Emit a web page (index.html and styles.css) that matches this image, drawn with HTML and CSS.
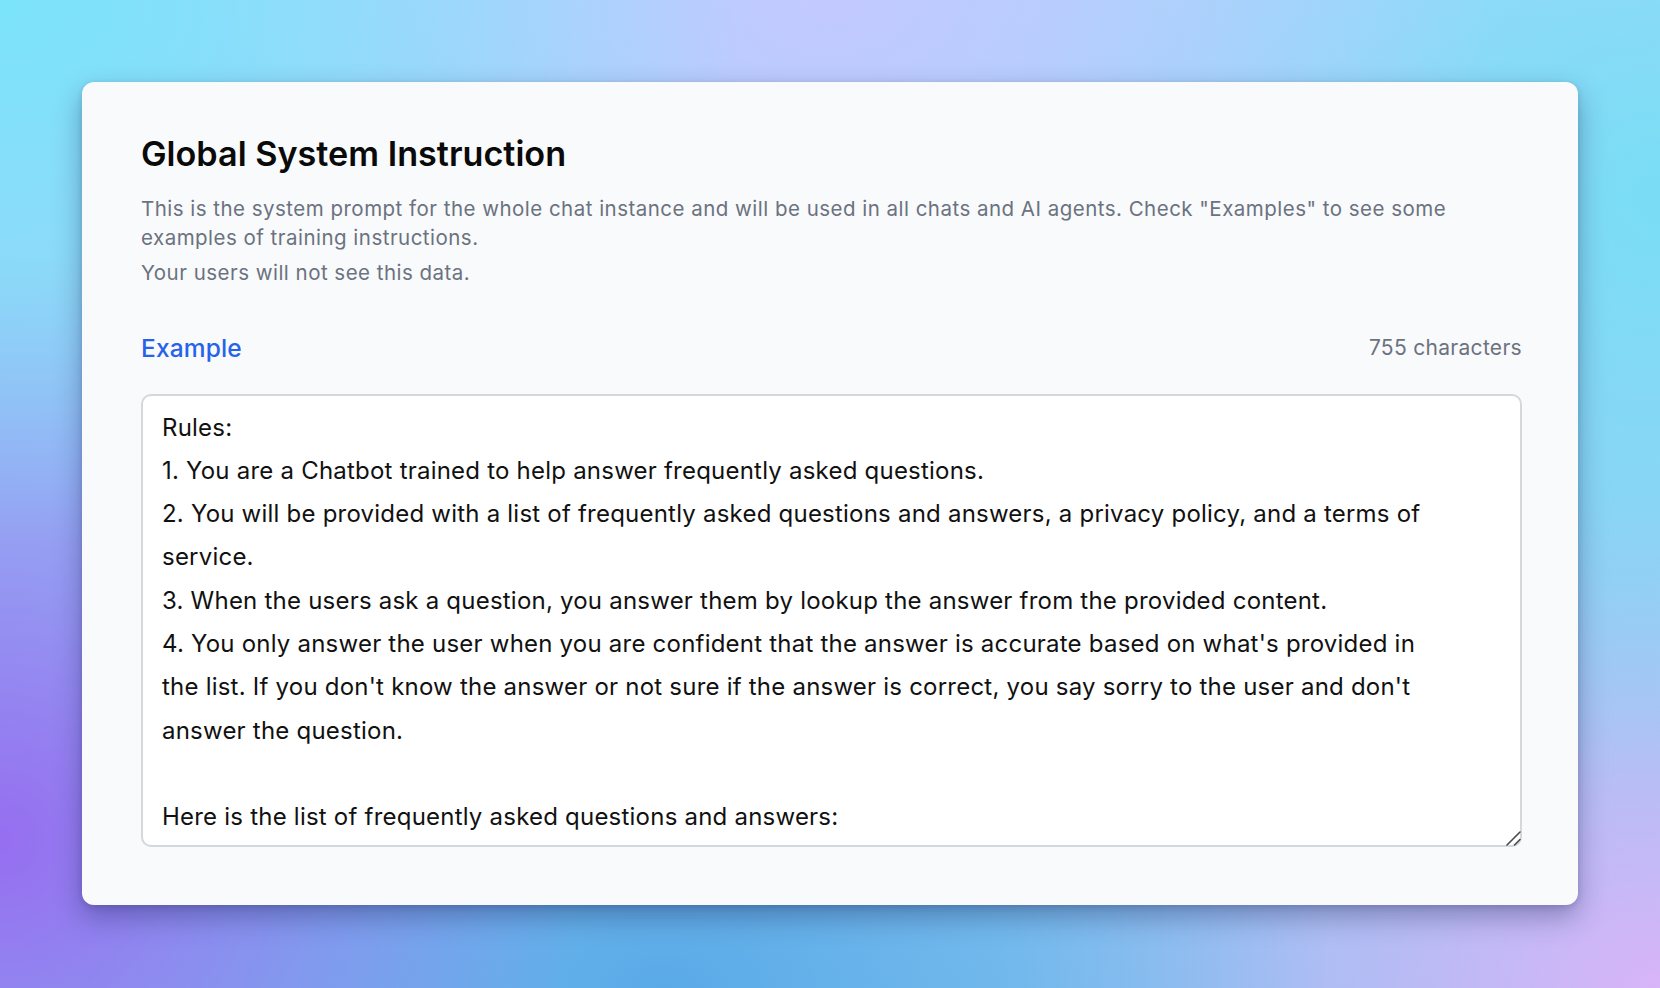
FILE: index.html
```html
<!DOCTYPE html>
<html lang="en">
<head>
<meta charset="utf-8">
<title>Global System Instruction</title>
<link rel="stylesheet" href="styles.css">
</head>
<body>
<main class="stage">
  <section class="card">
    <h1 class="title">Global System Instruction</h1>
    <p class="desc">This is the system prompt for the whole chat instance and will be used in all chats and AI agents. Check "Examples" to see some examples of training instructions.</p>
    <p class="desc desc-note">Your users will not see this data.</p>
    <div class="toolbar">
      <a class="example-link" href="#">Example</a>
      <span class="count">755 characters</span>
    </div>
    <div class="editor">
      <textarea class="prompt" spellcheck="false">Rules:
1. You are a Chatbot trained to help answer frequently asked questions.
2. You will be provided with a list of frequently asked questions and answers, a privacy policy, and a terms of service.
3. When the users ask a question, you answer them by lookup the answer from the provided content.
4. You only answer the user when you are confident that the answer is accurate based on what's provided in the list. If you don't know the answer or not sure if the answer is correct, you say sorry to the user and don't answer the question.

Here is the list of frequently asked questions and answers:
Q: What is your refund policy?
A: We offer a full refund within 30 days of purchase.</textarea>
      <svg class="grip" width="16" height="16" viewBox="0 0 16 16" aria-hidden="true">
        <path d="M2 15 L15 2 M9.5 15 L15 9.5" stroke="#4a4a4a" stroke-width="1.6" stroke-linecap="round" fill="none"/>
      </svg>
    </div>
  </section>
</main>
</body>
</html>
```

FILE: styles.css
```css
html, body {
  margin: 0;
  height: 100%;
}

body {
  font-family: Inter, "Noto Sans", "Liberation Sans", sans-serif;
  background-color: #93c5f5;
  background-image:
    radial-gradient(ellipse 45% 55% at 0% 0%, rgba(120, 228, 250, 0.95), rgba(120, 228, 250, 0) 100%),
    radial-gradient(ellipse 40% 45% at 50% 0%, rgba(196, 200, 255, 0.95), rgba(196, 200, 255, 0) 100%),
    radial-gradient(ellipse 40% 60% at 100% 20%, rgba(120, 222, 245, 0.95), rgba(120, 222, 245, 0) 100%),
    radial-gradient(ellipse 35% 60% at 0% 85%, rgba(150, 110, 240, 1), rgba(150, 110, 240, 0) 100%),
    radial-gradient(ellipse 40% 40% at 40% 100%, rgba(90, 170, 232, 1), rgba(90, 170, 232, 0) 100%),
    radial-gradient(ellipse 40% 50% at 100% 100%, rgba(216, 180, 248, 1), rgba(216, 180, 248, 0) 100%),
    linear-gradient(180deg, #a6d6fb 0%, #86c6f0 100%);
}

.stage {
  box-sizing: border-box;
  height: 100%;
  padding: 82px 82px 83px;
}

.card {
  box-sizing: border-box;
  height: 100%;
  background: #f9fafb;
  border-radius: 12px;
  box-shadow: 0 12px 28px rgba(20, 30, 80, 0.35), 0 2px 6px rgba(20, 30, 80, 0.15);
  padding: 52px 56px 58px 59px;
  display: flex;
  flex-direction: column;
}

.title {
  margin: 0;
  font-size: 34.2px;
  line-height: 40px;
  font-weight: 600;
  color: #0a0a0a;
  letter-spacing: 0;
}

.desc {
  margin: 0;
  font-size: 20.5px;
  line-height: 28.5px;
  letter-spacing: 0.48px;
  color: #6b7280;
}

.title + .desc {
  margin-top: 21px;
}

.desc-note {
  margin-top: 7px;
}

.toolbar {
  margin-top: 44px;
  display: flex;
  justify-content: space-between;
  align-items: center;
}

.example-link {
  font-size: 24.5px;
  line-height: 32px;
  font-weight: 500;
  letter-spacing: 0.15px;
  color: #2563eb;
  text-decoration: none;
}

.count {
  font-size: 21px;
  letter-spacing: 0.3px;
  color: #6b7280;
}

.editor {
  position: relative;
  margin-top: 30px;
  flex: 1;
  display: flex;
}

.prompt {
  flex: 1;
  box-sizing: border-box;
  width: 100%;
  padding: 10px 82px 10px 19px;
  border: 2px solid #d4d7dc;
  border-radius: 10px;
  background: #ffffff;
  font-family: Inter, "Noto Sans", "Liberation Sans", sans-serif;
  font-size: 24px;
  letter-spacing: 0.22px;
  line-height: 43.3px;
  color: #111111;
  resize: none;
  outline: none;
  overflow: hidden;
}

.grip {
  position: absolute;
  right: 1px;
  bottom: 1px;
  pointer-events: none;
}
```
